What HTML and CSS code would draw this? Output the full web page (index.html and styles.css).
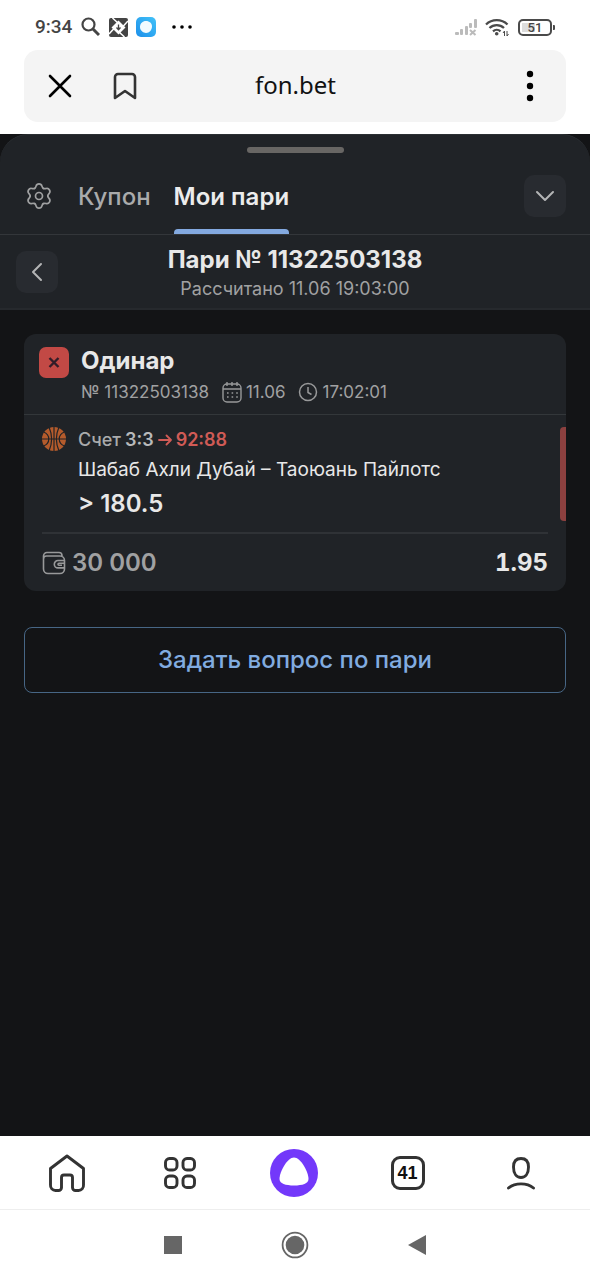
FILE: index.html
```html
<!DOCTYPE html>
<html lang="ru">
<head>
<meta charset="utf-8">
<meta name="viewport" content="width=device-width, initial-scale=1">
<title>fon.bet</title>
<link rel="stylesheet" href="styles.css">
</head>
<body>
<div class="screen">
  <div class="status">
    <div class="status-group">
      <span class="clock">9:34</span>
      <svg width="20" height="20" viewBox="0 0 20 20" fill="none" stroke="#444" stroke-width="2.2"><circle cx="8.500" cy="7.5" r="6"/><path d="M13 12 19 18" stroke-width="3"/></svg>
      <svg width="20" height="20" viewBox="0 0 20 20"><rect x="1" y="1" width="19" height="19" rx="2" fill="#444"/><path d="m10.500 3.500 7 7-7 7-7-7z" fill="#fff"/><path d="M4.500 1l6 5.500M20 4l-5.500 6M16.500 20l-6-5.500M1 17l5.500-6" fill="none" stroke="#fff" stroke-width="1.500"/><path d="M10.500 7.500v5M8.500 10.500l2 2.300 2-2.300" fill="none" stroke="#444" stroke-width="1.300"/></svg>
      <svg width="20" height="20" viewBox="0 0 20 20"><defs><linearGradient id="app-blue" x1="0" y1="1" x2="1" y2="0"><stop offset="0" stop-color="#1c8fea"/><stop offset="1" stop-color="#42c2f8"/></linearGradient></defs><rect width="20" height="20" rx="5" fill="url(#app-blue)"/><path d="M10 4c3.500 0 6 2.300 6 5.500S13.500 16 10 16c-1.500 0-2.500-.500-3.500-1.200C5 13.700 4 12 4 10c0-3.500 2.500-6 6-6z" fill="#f2fbff"/></svg>
      <svg class="more" width="20" height="4" viewBox="0 0 20 4"><circle cx="2" cy="2" r="1.800"/><circle cx="10" cy="2" r="1.800"/><circle cx="18" cy="2" r="1.800"/></svg>
    </div>
    <div class="status-group">
      <svg width="22" height="17" viewBox="0 0 22 17" fill="#bbb"><rect x="0" y="13" width="4" height="3" rx="1"/><rect x="5" y="10" width="3" height="6" rx="1"/><rect x="10" y="7" width="3" height="9" rx="1"/><rect x="14" y="4" width="3" height="5" rx="1"/><rect x="19" y="0" width="3" height="9" rx="1"/><path d="m15 11 5.500 5M20.500 11 15 16" stroke="#bbb" stroke-width="2"/></svg>
      <svg width="25" height="19" viewBox="0 0 25 19" fill="none" stroke="#4a4a4a" stroke-width="2.300"><path d="M1 6.500a15.500 15.500 0 0 1 21.500 0M4.500 10a10.500 10.500 0 0 1 14.500 0M8 13.300a5.500 5.500 0 0 1 7.500 0"/><circle cx="11.700" cy="15.700" r="1.800" fill="#4a4a4a" stroke="none"/><path d="M19.500 18v-5l-1.500 2M22 13v5l1.500-2" stroke-width="1"/></svg>
      <svg width="37" height="17" viewBox="0 0 37 17"><rect x="1" y="1" width="32" height="15" rx="4" fill="none" stroke="#4a4a4a" stroke-width="2"/><rect x="4" y="4" width="13" height="9" fill="#ddd"/><path d="M35 6h1a1 1 0 0 1 1 1v3a1 1 0 0 1-1 1h-1z" fill="#4a4a4a"/><text class="battery-text" x="17" y="13" text-anchor="middle">51</text></svg>
    </div>
  </div>

  <header class="address">
    <button class="plain" aria-label="Закрыть"><svg width="24" height="24" viewBox="0 0 24 24" fill="none" stroke="#000" stroke-width="2.600" stroke-linecap="round"><path d="m2 2 20 20M22 2 2 22"/></svg></button>
    <button class="plain" aria-label="Закладка"><svg width="24" height="28" viewBox="0 0 24 28" fill="none" stroke="#333" stroke-width="2.600" stroke-linejoin="round"><path d="M2 26V5a3 3 0 0 1 3-3h14a3 3 0 0 1 3 3v21l-10-7z"/></svg></button>
    <span class="domain">fon.bet</span>
    <button class="plain" aria-label="Меню"><svg width="24" height="32" viewBox="0 0 24 32"><circle cx="12" cy="4" r="3.200"/><circle cx="12" cy="16" r="3.200"/><circle cx="12" cy="28" r="3.200"/></svg></button>
  </header>

  <main class="app">
    <section class="sheet">
      <div class="handle"></div>
      <nav class="tabs">
        <button class="plain gear" aria-label="Настройки"><svg width="26" height="26" viewBox="0 0 26 26" fill="none" stroke="#a0a1a2" stroke-width="1.700" stroke-linecap="round"><defs><path id="lobe" d="M8.600 5.400C11 4 9 .9 13 .9s2 3.100 4.400 4.500"/></defs><use href="#lobe"/><use href="#lobe" transform="rotate(60 13 13)"/><use href="#lobe" transform="rotate(120 13 13)"/><use href="#lobe" transform="rotate(180 13 13)"/><use href="#lobe" transform="rotate(240 13 13)"/><use href="#lobe" transform="rotate(300 13 13)"/><circle cx="13" cy="13" r="3.500"/></svg></button>
        <button class="plain tab">Купон</button>
        <button class="plain tab tab-active">Мои пари</button>
        <button class="plain square collapse" aria-label="Свернуть"><svg width="20" height="12" viewBox="0 0 20 12" fill="none" stroke="#b4b5b6" stroke-width="2" stroke-linecap="round" stroke-linejoin="round"><path d="m2 2 8 8 8-8"/></svg></button>
      </nav>
      <div class="subhead">
        <button class="plain square" aria-label="Назад"><svg width="12" height="20" viewBox="0 0 12 20" fill="none" stroke="#b4b5b6" stroke-width="2" stroke-linecap="round" stroke-linejoin="round"><path d="m10 2-8 8 8 8"/></svg></button>
        <div class="subhead-text">
          <h1 class="title">Пари № 11322503138</h1>
          <p class="calc">Рассчитано 11.06 19:03:00</p>
        </div>
      </div>
    </section>

    <article class="card">
      <div class="card-head">
        <svg width="30" height="31" viewBox="0 0 30 31"><rect width="30" height="31" rx="7" fill="#c24945"/><path d="m10.500 11 9 9M19.500 11l-9 9" stroke="#321d29" stroke-width="2.400"/></svg>
        <div>
          <h2 class="kind">Одинар</h2>
          <div class="meta">
            <span>№ 11322503138</span>
            <span class="meta-item"><svg width="20" height="22" viewBox="0 0 20 22" fill="none" stroke="#98999a" stroke-width="1.400"><rect x="1" y="3" width="18" height="18" rx="4"/><path d="M1 8h18M5 1v4M10 1v4M15 1v4"/><path d="M5 12h11M5 16h11" stroke-width="1.600" stroke-dasharray="1.600 3"/></svg>11.06</span>
            <span class="meta-item"><svg width="20" height="20" viewBox="0 0 20 20" fill="none" stroke="#98999a" stroke-width="1.500"><circle cx="10" cy="10" r="8.500"/><path d="M10 5v5.500l3.500 2"/></svg>17:02:01</span>
          </div>
        </div>
      </div>
      <div class="event">
        <svg width="24" height="24" viewBox="0 0 24 24"><circle cx="12" cy="12" r="12" fill="#b45b2c"/><path d="M12 0v24M0 12h24M7 0c3.500 8 3.500 16 0 24M17 0c-3.500 8-3.500 16 0 24M1.500 5c7 2.500 7 11.500 0 14M22.500 5c-7 2.500-7 11.500 0 14" fill="none" stroke="#202327" stroke-width="1.200"/></svg>
        <div class="event-body">
          <p class="score">Счет <span class="first">3:3</span> <svg width="14" height="12" viewBox="0 0 14 12" fill="none" stroke="#d05b56" stroke-width="1.800" stroke-linecap="round" stroke-linejoin="round"><path d="M1 6h12M8.500 1.500 13 6l-4.500 4.500"/></svg> <span class="final">92:88</span></p>
          <p class="teams">Шабаб Ахли Дубай – Таоюань Пайлотс</p>
          <p class="pick">&gt; 180.5</p>
        </div>
        <div class="result-bar"></div>
      </div>
      <div class="stake">
        <svg width="24" height="24" viewBox="0 0 24 24" fill="none" stroke="#98999a" stroke-width="1.600"><path d="M20 5V4.500a3 3 0 0 0-3-3H5a3.500 3.500 0 0 0-3.500 3.500v13A4.500 4.500 0 0 0 6 22.500h12a4.500 4.500 0 0 0 4.500-4.500V9.500A4.500 4.500 0 0 0 18 5H4.500A3 3 0 0 0 1.500 8"/><path d="M22.500 9.500H16a3.700 3.700 0 0 0 0 7.400h6.500M22.500 12.200h-5.500a1 1 0 0 0 0 2h3"/></svg>
        <span class="amount">30 000</span>
        <span class="odds">1.95</span>
      </div>
    </article>

    <button class="ask">Задать вопрос по пари</button>
  </main>

  <nav class="browser-nav">
    <button class="plain" aria-label="Домой"><svg width="38" height="40" viewBox="0 0 38 40" fill="none" stroke="#333" stroke-width="2.900" stroke-linejoin="round"><path d="M19 3 2.500 15.500V32a5 5 0 0 0 5 5.500h3a3 3 0 0 0 3-3V24.500a2.500 2.500 0 0 1 2.500-2.500h6a2.500 2.500 0 0 1 2.500 2.500v10a3 3 0 0 0 3 3h3a5 5 0 0 0 5-5.500V15.500z"/></svg></button>
    <button class="plain" aria-label="Приложения"><svg width="32" height="32" viewBox="0 0 32 32" fill="none" stroke="#333" stroke-width="2.900"><rect x="1.500" y="1.500" width="11.500" height="11.500" rx="4"/><rect x="19" y="1.500" width="11.500" height="11.500" rx="4"/><rect x="1.500" y="19" width="11.500" height="11.500" rx="4"/><rect x="19" y="19" width="11.500" height="11.500" rx="4"/></svg></button>
    <button class="plain" aria-label="Алиса"><svg width="48" height="48" viewBox="0 0 48 48"><circle cx="24" cy="24" r="24" fill="#7338fa"/><path d="M24 8.500c6.500 0 14.500 14 14.500 21.500 0 4.500-6 6.500-14.500 6.500S9.500 34.500 9.500 30C9.500 22.500 17.500 8.500 24 8.500z" fill="#fff"/></svg></button>
    <button class="plain count" aria-label="Вкладки: 41">41</button>
    <button class="plain" aria-label="Профиль"><svg width="30" height="34" viewBox="0 0 30 34" fill="none" stroke="#333" stroke-width="2.900" stroke-linecap="round"><path d="M15 2.500c5 0 7.500 3 7.500 8.500 0 6.500-3 10.500-7.500 10.500S7.500 17.500 7.500 11C7.500 5.500 10 2.500 15 2.500zM2.500 32c6.500-5.500 18.500-5.500 25 0"/></svg></button>
  </nav>

  <nav class="system-nav">
    <button class="plain" aria-label="Недавние"><svg width="18" height="18" viewBox="0 0 18 18"><path d="M0 0h18v18H0z" fill="#666"/></svg></button>
    <button class="plain" aria-label="Главный экран"><svg width="28" height="28" viewBox="0 0 28 28"><circle cx="14" cy="14" r="12.400" fill="none" stroke="#666" stroke-width="1.800"/><circle cx="14" cy="14" r="9.300" fill="#666"/></svg></button>
    <button class="plain" aria-label="Назад"><svg width="18" height="20" viewBox="0 0 18 20"><path d="M18 0v20L0 10z" fill="#666"/></svg></button>
  </nav>
</div>
</body>
</html>
```
FILE: styles.css
```css
* {
  box-sizing: border-box;
}

body {
  margin: 0;
  background: #fff;
  font-family: Inter, "Noto Sans", sans-serif;
  color: #e8e8e8;
}

h1, h2, p {
  margin: 0;
}

svg {
  display: block;
  flex: none;
}

.plain {
  display: flex;
  align-items: center;
  justify-content: center;
  padding: 0;
  border: 0;
  background: none;
  color: inherit;
  font: inherit;
}

.screen {
  display: flex;
  flex-direction: column;
  min-height: 100vh;
}

/* Status bar */
.status {
  display: flex;
  justify-content: space-between;
  height: 50px;
  padding: 4px 35px 0;
}

.status-group {
  display: flex;
  align-items: center;
  gap: 8px;
}

.clock {
  color: #444;
  font: 500 19px/24px Roboto, sans-serif;
}

.more {
  margin-left: 8px;
}

.battery-text {
  fill: #444;
  font: 500 13px Roboto, sans-serif;
}

/* Address bar */
.address {
  display: grid;
  grid-template-columns: 24px 24px 1fr 24px;
  align-items: center;
  column-gap: 41px;
  height: 72px;
  margin: 0 24px 12px;
  padding: 0 24px;
  border-radius: 14px;
  background: #f4f4f4;
}

.domain {
  padding-right: 64px;
  padding-bottom: 2px;
  color: #111;
  font: 24px/32px "Noto Sans", sans-serif;
  text-align: center;
}

/* Coupon sheet */
.app {
  flex: 1;
  background: #131416;
}

.sheet {
  padding-top: 12px;
  border-top: 1px solid #2b2f33;
  border-bottom: 2px solid #26292d;
  border-radius: 28px 28px 0 0;
  background: #202327;
}

.handle {
  width: 97px;
  height: 6px;
  margin: 0 auto;
  border-radius: 3px;
  background: #686664;
}

.tabs {
  display: flex;
  align-items: center;
  height: 82px;
  padding: 4px 24px 0 26px;
  border-bottom: 1px solid #33363a;
}

.gear {
  margin-right: 26px;
}

.tab {
  height: 100%;
  margin-right: 23px;
  padding-top: 6px;
  border-bottom: 5px solid transparent;
  color: #aaabac;
  font-size: 24px;
  font-weight: 500;
}

.tab-active {
  position: relative;
  color: #ececec;
  font-weight: 600;
}

.tab-active::after {
  position: absolute;
  right: 0;
  bottom: -5px;
  left: 0;
  height: 5px;
  border-radius: 4px 4px 0 0;
  background: #83a9e0;
  content: "";
}

.square {
  width: 42px;
  height: 42px;
  border-radius: 10px;
  background: #282b30;
}

.collapse {
  margin-left: auto;
}

.subhead {
  display: grid;
  grid-template-columns: 42px 1fr 42px;
  align-items: center;
  height: 73px;
  padding: 0 16px;
}

.subhead-text {
  padding-top: 2px;
  text-align: center;
}

.title {
  font-size: 24px;
  font-weight: 700;
  line-height: 32px;
}

.calc {
  color: #a0a1a2;
  font-size: 18px;
  line-height: 26px;
}

/* Bet card */
.card {
  margin: 24px 24px 0;
  border-radius: 12px;
  background: #202327;
}

.card-head {
  display: flex;
  gap: 12px;
  height: 81px;
  padding: 13px 15px 0;
  border-bottom: 1px solid #33373a;
}

.kind {
  font-size: 24px;
  font-weight: 700;
  line-height: 28px;
}

.meta {
  display: flex;
  align-items: center;
  gap: 13px;
  color: #a0a1a2;
  font-size: 17px;
  line-height: 34px;
}

.meta-item {
  display: flex;
  align-items: center;
  gap: 4px;
}

.event {
  display: flex;
  gap: 12px;
  padding: 12px 0 11px 18px;
}

.event-body {
  flex: 1;
}

.score {
  display: flex;
  align-items: center;
  gap: 4px;
  color: #aaabac;
  font-size: 18px;
  font-weight: 500;
  line-height: 26px;
}

.first {
  color: #b8b9ba;
  font-weight: 600;
}

.final {
  color: #d05b56;
  font-weight: 600;
}

.teams {
  font-size: 19px;
  line-height: 34px;
}

.pick {
  font-size: 24px;
  font-weight: 600;
  line-height: 34px;
}

.result-bar {
  width: 6px;
  border-radius: 4px 0 0 4px;
  background: #8c403f;
}

.stake {
  display: flex;
  align-items: center;
  gap: 6px;
  height: 59px;
  margin: 0 18px;
  border-top: 2px solid #2f3236;
}

.amount {
  color: #a0a1a2;
  font-size: 24px;
  font-weight: 600;
}

.odds {
  margin-left: auto;
  font-size: 24px;
  font-variant-numeric: tabular-nums;
  font-weight: 700;
}

.ask {
  display: block;
  width: calc(100% - 48px);
  height: 66px;
  margin: 36px 24px;
  border: 1px solid #476685;
  border-radius: 8px;
  background: none;
  color: #81ace0;
  font: 500 24px/30px Inter, "Noto Sans", sans-serif;
}

/* Browser and system navigation */
.browser-nav {
  display: grid;
  grid-template-columns: repeat(5, 1fr);
  align-items: center;
  justify-items: center;
  height: 74px;
  padding: 0 12px 0 10px;
  border-bottom: 1px solid #eee;
}

.count {
  width: 34px;
  height: 34px;
  border: 3px solid #333;
  border-radius: 9px;
  color: #111;
  font: 700 18px/24px "Liberation Sans", sans-serif;
}

.system-nav {
  display: grid;
  grid-template-columns: repeat(3, 122px);
  align-items: center;
  justify-content: center;
  justify-items: center;
  height: 70px;
}
```
